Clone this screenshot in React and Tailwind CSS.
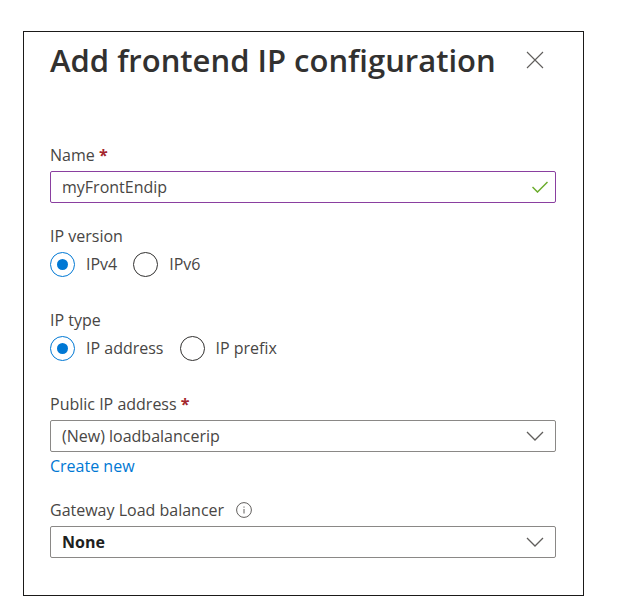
import React, { useState } from 'react';

const ipVersions = ['IPv4', 'IPv6'];
const ipTypes = ['IP address', 'IP prefix'];

function Required() {
  return <span className="font-bold text-[#a4262c]"> *</span>;
}

function RadioGroup({ legend, name, options, value, onChange }) {
  return (
    <fieldset className="mb-8">
      <legend className="mb-1">{legend}</legend>
      <div className="flex gap-4">
        {options.map((option) => (
          <label key={option} className="flex h-6 items-center gap-[11px]">
            <input
              type="radio"
              name={name}
              value={option}
              checked={value === option}
              onChange={() => onChange(option)}
              className="grid size-[25px] shrink-0 appearance-none place-items-center rounded-full border border-[#323130] bg-white checked:border-[#0078d4] checked:before:size-[11px] checked:before:rounded-full checked:before:bg-[#0078d4]"
            />
            {option}
          </label>
        ))}
      </div>
    </fieldset>
  );
}

function SelectBox({ id, className = '', children }) {
  return (
    <div className="relative">
      <select
        id={id}
        className={`block h-8 w-full appearance-none rounded-xs border border-[#8a8886] bg-white pl-[11px] pr-10 outline-none ${className}`}
      >
        {children}
      </select>
      <svg
        className="pointer-events-none absolute right-3 top-1/2 h-[10px] w-[18px] -translate-y-1/2"
        viewBox="0 0 18 10"
        fill="none"
        stroke="#605e5c"
        strokeWidth="1.3"
        aria-hidden="true"
      >
        <path d="M1 1l8 8 8-8" />
      </svg>
    </div>
  );
}

export default function App() {
  const [name, setName] = useState('myFrontEndip');
  const [version, setVersion] = useState('IPv4');
  const [ipType, setIpType] = useState('IP address');

  return (
    <main className="mb-5 ml-[23px] mr-[35px] mt-[31px] border border-[#1b1a19] bg-white pb-[37px] pl-[26px] pr-[27px] pt-2 font-['Open_Sans',sans-serif] text-base text-[#484644]">
      <header className="mb-[63px] flex items-center justify-between pr-3">
        <h1 className="whitespace-nowrap text-[31px] font-semibold leading-10 text-[#323130]">
          Add frontend IP configuration
        </h1>
        <button type="button" aria-label="Close">
          <svg className="size-[18px]" viewBox="0 0 18 18" fill="none" stroke="#605e5c" strokeWidth="1.1">
            <path d="M1 1l16 16M17 1L1 17" />
          </svg>
        </button>
      </header>

      <form onSubmit={(e) => e.preventDefault()}>
        {/* Name */}
        <div className="mb-[21px]">
          <label htmlFor="name" className="mb-1 block">
            Name
            <Required />
          </label>
          <div className="relative">
            <input
              id="name"
              type="text"
              value={name}
              onChange={(e) => setName(e.target.value)}
              className="block h-8 w-full rounded-xs border border-[#8a3fa0] pl-[11px] pr-10 outline-none"
            />
            <svg
              className="pointer-events-none absolute right-2 top-1/2 h-3 w-4 -translate-y-1/2"
              viewBox="0 0 16 12"
              fill="none"
              stroke="#6bac2c"
              strokeWidth="1.5"
              aria-hidden="true"
            >
              <path d="M0.5 6l5 5L15.5 1" />
            </svg>
          </div>
        </div>

        <RadioGroup legend="IP version" name="version" options={ipVersions} value={version} onChange={setVersion} />
        <RadioGroup legend="IP type" name="ipType" options={ipTypes} value={ipType} onChange={setIpType} />

        {/* Public IP address */}
        <div className="mb-5">
          <label htmlFor="publicIp" className="mb-1 block">
            Public IP address
            <Required />
          </label>
          <SelectBox id="publicIp">
            <option>(New) loadbalancerip</option>
          </SelectBox>
          <a href="#create" className="mt-0.5 block w-fit text-[#0078d4]">
            Create new
          </a>
        </div>

        {/* Gateway Load balancer */}
        <div>
          <div className="mb-1 flex items-center gap-3">
            <label htmlFor="gateway">Gateway Load balancer</label>
            <svg className="size-4" viewBox="0 0 16 16" fill="none" stroke="#605e5c" aria-hidden="true">
              <circle cx="8" cy="8" r="7.4" />
              <path d="M8 7v4.5M8 4.5v1.2" />
            </svg>
          </div>
          <SelectBox id="gateway" className="font-bold text-[#201f1e]">
            <option>None</option>
          </SelectBox>
        </div>
      </form>
    </main>
  );
}
